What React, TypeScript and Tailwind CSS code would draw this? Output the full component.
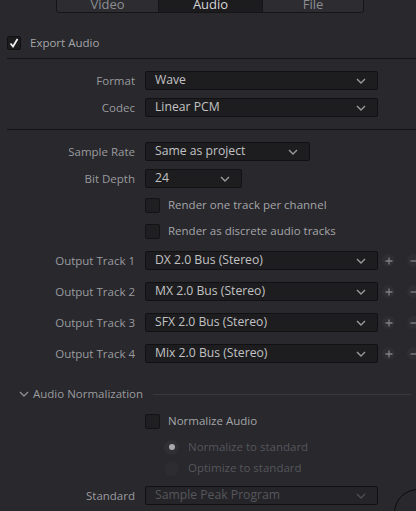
import { ReactNode } from 'react'

const Chevron = ({ className = '' }: { className?: string }) => (
  <svg width="10" height="6" viewBox="0 0 10 6" className={className}>
    <path d="M1 1l4 4 4-4" fill="none" stroke="currentColor" strokeWidth="1.4" />
  </svg>
)

const Select = ({ value, width, disabled }: { value: string; width: string; disabled?: boolean }) => (
  <div
    className={`${width} h-[19px] flex items-center justify-between pl-[9px] pr-[11px] rounded-[2px] border border-[#111113] text-[12.2px] ${
      disabled ? 'bg-[#252529] text-[#56565b]' : 'bg-[#1d1d1f] text-[#c2c2c4]'
    }`}
  >
    <span className="leading-none">{value}</span>
    <Chevron className={disabled ? 'text-[#4d4d52]' : 'text-[#9a9a9d]'} />
  </div>
)

const Row = ({ label, children, className = '' }: { label?: string; children: ReactNode; className?: string }) => (
  <div className={`flex items-center ${className}`}>
    <div className="w-[135px] shrink-0 text-right text-[#9b9b9e] whitespace-nowrap">{label}</div>
    <div className="ml-[10px] flex items-center">{children}</div>
  </div>
)

const Box = () => <div className="w-[15px] h-[15px] rounded-[2px] bg-[#1f1f21] border border-[#131315]" />

const Track = ({ n, value }: { n: number; value: string }) => (
  <Row label={`Output Track ${n}`} className="h-[19px] mb-[12px]">
    <Select value={value} width="w-[233px]" />
    <div className="ml-[4px] w-[13px] h-[13px] rounded-full bg-[#2e2e33] flex items-center justify-center text-[#808085]">
      <svg width="8" height="8" viewBox="0 0 8 8"><path d="M4 0.5v7M0.5 4h7" stroke="currentColor" strokeWidth="1.3" /></svg>
    </div>
    <div className="ml-[12px] w-[13px] h-[13px] rounded-full bg-[#2e2e33] flex items-center justify-center text-[#808085]">
      <svg width="8" height="8" viewBox="0 0 8 8"><path d="M0.5 4h7" stroke="currentColor" strokeWidth="1.3" /></svg>
    </div>
  </Row>
)

export default function App() {
  return (
    <div
      className="relative w-[416px] h-[511px] overflow-hidden bg-[#28282d] text-[11.5px]"
      style={{ fontFamily: '"Open Sans", "Noto Sans", sans-serif' }}
    >
      {/* tabs */}
      <div className="ml-[56px] mt-[-10px] w-[308px] h-[23px] flex rounded-b-[3px] border border-[#151517] bg-[#2c2c31] text-[13px] overflow-hidden">
        <div className="w-[101px] flex items-end justify-center pb-[1px] text-[#8e8e91] leading-none">Video</div>
        <div className="w-[105px] flex items-end justify-center pb-[1px] bg-[#1c1c1e] border-x border-[#151517] text-[#d6d6d8] leading-none">Audio</div>
        <div className="flex-1 flex items-end justify-center pb-[1px] text-[#8e8e91] leading-none">File</div>
      </div>

      {/* export audio */}
      <div className="flex items-center mt-[23px] ml-[7px] h-[14px]">
        <div className="w-[14px] h-[14px] rounded-[2px] bg-[#1c1c1e] border border-[#111] flex items-center justify-center">
          <svg width="10" height="10" viewBox="0 0 10 10">
            <path d="M1.5 5.5l2.5 3 4.5-7.5" fill="none" stroke="#f2f2f2" strokeWidth="1.8" />
          </svg>
        </div>
        <span className="ml-[9px] text-[#a5a5a8]">Export Audio</span>
      </div>

      <div className="ml-[7px] mt-[8px] h-px bg-[#141416]" />

      <Row label="Format" className="mt-[12px] h-[19px]">
        <Select value="Wave" width="w-[233px]" />
      </Row>
      <Row label="Codec" className="mt-[8px] h-[19px]">
        <Select value="Linear PCM" width="w-[233px]" />
      </Row>

      <div className="ml-[7px] mt-[12px] h-px bg-[#141416]" />

      <Row label="Sample Rate" className="mt-[12px] h-[19px]">
        <Select value="Same as project" width="w-[165px]" />
      </Row>
      <Row label="Bit Depth" className="mt-[8px] h-[19px]">
        <Select value="24" width="w-[97px]" />
      </Row>

      <Row className="mt-[9px] h-[16px]">
        <Box />
        <span className="ml-[8px] text-[#a5a5a8]">Render one track per channel</span>
      </Row>
      <Row className="mt-[10px] h-[16px]">
        <Box />
        <span className="ml-[8px] text-[#a5a5a8]">Render as discrete audio tracks</span>
      </Row>

      <div className="mt-[12px]">
        <Track n={1} value="DX 2.0 Bus (Stereo)" />
        <Track n={2} value="MX 2.0 Bus (Stereo)" />
        <Track n={3} value="SFX 2.0 Bus (Stereo)" />
        <Track n={4} value="Mix 2.0 Bus (Stereo)" />
      </div>

      {/* normalization */}
      <div className="flex items-center mt-[24px] h-[14px]">
        <Chevron className="ml-[19px] text-[#8e8e91]" />
        <span className="ml-[4px] text-[#9b9b9e]">Audio Normalization</span>
        <div className="ml-[10px] w-[258px] h-px bg-[#38383e]" />
      </div>

      <Row className="mt-[12px] h-[16px]">
        <Box />
        <span className="ml-[8px] text-[#a5a5a8]">Normalize Audio</span>
      </Row>

      <Row className="mt-[10px] h-[16px]">
        <div className="ml-[19px] w-[15px] h-[15px] rounded-full bg-[#2f2f34] flex items-center justify-center">
          <div className="w-[6px] h-[6px] rounded-full bg-[#a9a9ac]" />
        </div>
        <span className="ml-[9px] text-[#56565b]">Normalize to standard</span>
      </Row>
      <Row className="mt-[5px] h-[16px]">
        <div className="ml-[19px] w-[15px] h-[15px] rounded-full bg-[#2c2c31]" />
        <span className="ml-[9px] text-[#56565b]">Optimize to standard</span>
      </Row>

      <Row label="Standard" className="mt-[10px] h-[19px]">
        <Select value="Sample Peak Program" width="w-[233px]" disabled />
      </Row>

      <div className="absolute left-[394px] top-[489px] w-[48px] h-[48px] rounded-full border-[1.5px] border-[#0c0c0d]" />
    </div>
  )
}
